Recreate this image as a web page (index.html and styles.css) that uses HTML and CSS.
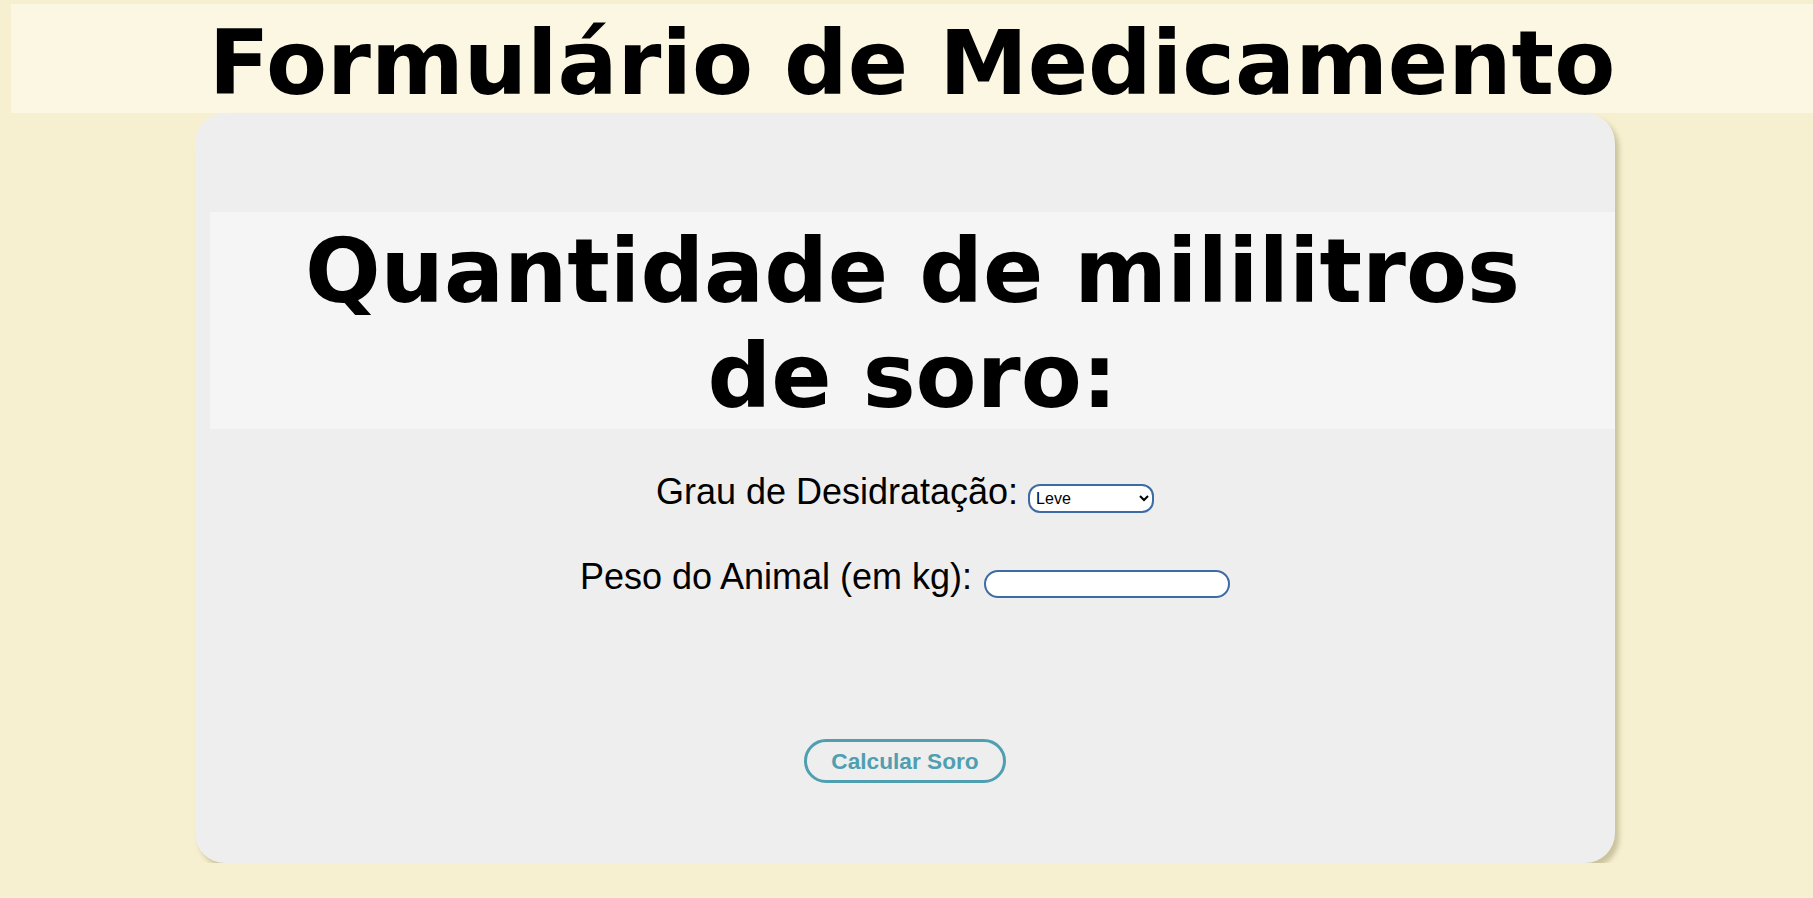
FILE: index.html
```html
<!DOCTYPE html>
<html lang="pt-BR">
<head>
<meta charset="utf-8">
<title>Formulário de Medicamento</title>
<link rel="stylesheet" href="styles.css">
</head>
<body>
<header class="page-header">
  <h1 class="page-title">Formulário de Medicamento</h1>
</header>
<main class="card">
  <h2 class="card-title">Quantidade de mililitros de soro:</h2>
  <form class="form">
    <div class="form-row row-grau">
      <label class="form-label" for="grau">Grau de Desidratação:</label>
      <select class="form-select" id="grau">
        <option>Leve</option>
        <option>Moderada</option>
        <option>Grave</option>
      </select>
    </div>
    <div class="form-row row-peso">
      <label class="form-label" for="peso">Peso do Animal (em kg):</label>
      <input class="form-input" id="peso" type="text">
    </div>
    <div class="form-actions">
      <button class="btn" type="button">Calcular Soro</button>
    </div>
  </form>
</main>
</body>
</html>
```

FILE: styles.css
```css
html, body {
  margin: 0;
  padding: 0;
}

body {
  background: #f6f0d0;
  font-family: "Liberation Sans", Arial, sans-serif;
  color: #000;
}

.page-header {
  margin: 4px 0 0 11px;
  height: 109px;
  box-sizing: border-box;
  padding-top: 8px;
  background: #fcf7e3;
}

.page-title {
  margin: 0;
  font-family: "DejaVu Sans", Verdana, sans-serif;
  font-weight: bold;
  font-size: 89px;
  line-height: 103.6px;
  text-align: center;
}

.card {
  width: 1420px;
  box-sizing: border-box;
  margin: 0 0 0 195px;
  padding: 99px 0 80px 15px;
  background: #eeeeee;
  border-radius: 30px;
  box-shadow: 4px 5px 5px rgba(120, 110, 60, 0.35);
}

.card-title {
  margin: 0;
  padding: 7px 80px 0;
  background: #f5f5f5;
  font-family: "DejaVu Sans", Verdana, sans-serif;
  font-weight: bold;
  font-size: 89px;
  line-height: 105px;
  text-align: center;
}

.form {
  display: flex;
  flex-direction: column;
  margin-right: 15px;
}

.form-row {
  display: flex;
  justify-content: center;
  align-items: baseline;
  font-size: 36px;
  line-height: 42px;
}

.row-grau {
  margin-top: 42px;
  gap: 10px;
}

.row-peso {
  margin-top: 43px;
  gap: 12px;
}

.form-select {
  width: 126px;
  height: 29px;
  box-sizing: border-box;
  border: 2px solid #3d6ba3;
  border-radius: 12px;
  background: #fff;
  font-family: "Liberation Sans", Arial, sans-serif;
  font-size: 16px;
  color: #000;
  padding: 0 2px;
}

.form-input {
  width: 246px;
  height: 28px;
  box-sizing: border-box;
  border: 2px solid #3d6ba3;
  border-radius: 14px;
  background: #fff;
  font-family: "Liberation Sans", Arial, sans-serif;
  font-size: 16px;
  padding: 0 6px;
}

.form-actions {
  display: flex;
  justify-content: center;
  margin-top: 141px;
}

.btn {
  width: 202px;
  height: 44px;
  box-sizing: border-box;
  border: 3px solid #4f9fb1;
  border-radius: 22px;
  background: transparent;
  color: #4f9fb1;
  font-family: "Liberation Sans", Arial, sans-serif;
  font-weight: bold;
  font-size: 22.66px;
  padding: 0;
  cursor: pointer;
}
```
